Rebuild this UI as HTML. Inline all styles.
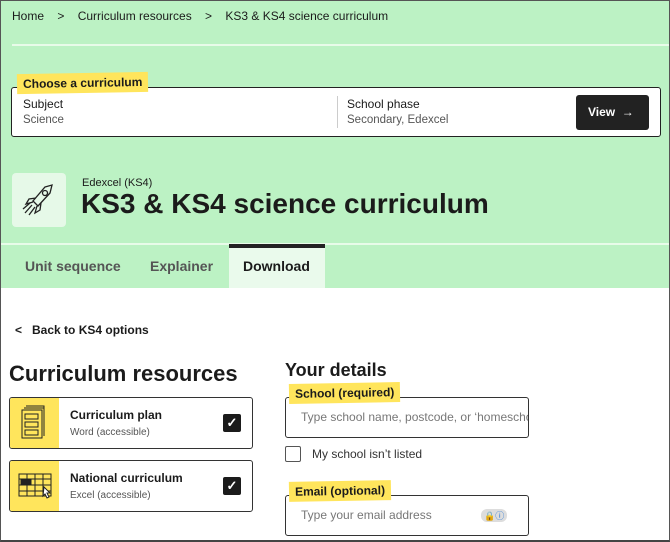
<!DOCTYPE html>
<html><head><style>
*{box-sizing:border-box;margin:0;padding:0}
body{width:670px;height:542px;overflow:hidden;font-family:"Liberation Sans",sans-serif;color:#1b1b1b;background:#fff;position:relative}
.frame{position:absolute;inset:0;border:1px solid #555;border-bottom:2px solid #444;pointer-events:none;z-index:9}
.green{position:absolute;left:0;top:0;width:670px;height:288px;background:#bcf2c4}
.a{position:absolute;white-space:nowrap}
.lbl{background:#ffe55c;font-weight:bold;font-size:12px;padding:3px 6px}
.card{position:absolute;left:9px;width:244px;height:52px;border:1.5px solid #333;border-radius:3px;background:#fff;overflow:hidden}
.card .y{position:absolute;left:0;top:0;bottom:0;width:49px;background:#ffe55c}
.card b{position:absolute;left:60px;top:10px;font-size:12px}
.card span{position:absolute;left:60px;top:29px;font-size:10px;color:#555}
.cb{position:absolute;left:213px;top:16px;width:18px;height:18px;background:#1b1b1b;border-radius:2px;color:#fff;font-size:13px;text-align:center;line-height:18px;font-weight:bold}
.inp{position:absolute;left:285px;width:244px;height:41px;border:1.5px solid #333;border-radius:3px;background:#fff;font-size:12px;color:#777;padding:12px 15px;white-space:nowrap;overflow:hidden}
</style></head><body>
<div class="green"></div>
<div class="a" style="left:12px;top:9px;font-size:12px">Home&nbsp;&nbsp;&nbsp;&nbsp;&gt;&nbsp;&nbsp;&nbsp;&nbsp;Curriculum resources&nbsp;&nbsp;&nbsp;&nbsp;&gt;&nbsp;&nbsp;&nbsp;&nbsp;KS3 &amp; KS4 science curriculum</div>
<div class="a" style="left:12px;top:44px;width:658px;height:2px;background:#e8fbe9"></div>
<div class="a" style="left:11px;top:87px;width:650px;height:50px;border:1.5px solid #222;border-radius:3px;background:#fff"></div>
<div class="a lbl" style="left:17px;top:73px;transform:rotate(-1deg)">Choose a curriculum</div>
<div class="a" style="left:23px;top:97px;font-size:12px">Subject</div>
<div class="a" style="left:23px;top:114px;font-size:11.5px;color:#555">Science</div>
<div class="a" style="left:337px;top:96px;width:1px;height:32px;background:#ccc"></div>
<div class="a" style="left:347px;top:97px;font-size:12px">School phase</div>
<div class="a" style="left:347px;top:114px;font-size:11.5px;color:#555">Secondary, Edexcel</div>
<div class="a" style="left:576px;top:95px;width:73px;height:35px;background:#222;border-radius:3px;color:#fff;font-weight:bold;font-size:12px;line-height:35px;padding-left:12px">View &nbsp;→</div>
<div class="a" style="left:12px;top:173px;width:54px;height:54px;background:#e6f9e8;border-radius:4px">
<svg width="54" height="54" viewBox="0 0 54 54" fill="none" stroke="#222" stroke-width="1.3"><path d="M33 14 L40 12 L38 20 L26 33 L21 28 Z"/><path d="M24 25 L17 26 L14 31 L21 29"/><path d="M29 30 L28 37 L23 40 L25 33"/><path d="M20 32 L13 40 M23 34 L17 42 M18 30 L11 36"/><circle cx="33" cy="20" r="2.5"/></svg></div>
<div class="a" style="left:82px;top:177px;font-size:11px">Edexcel (KS4)</div>
<div class="a" style="left:81px;top:188px;font-size:28px;font-weight:bold">KS3 &amp; KS4 science curriculum</div>
<div class="a" style="left:0;top:243px;width:670px;height:2px;background:#e8fbe9"></div>
<div class="a" style="left:25px;top:258px;font-size:14px;font-weight:bold;color:#555">Unit sequence</div>
<div class="a" style="left:150px;top:258px;font-size:14px;font-weight:bold;color:#555">Explainer</div>
<div class="a" style="left:229px;top:244px;width:96px;height:44px;background:#eafaec;border-top:4px solid #222"></div>
<div class="a" style="left:243px;top:258px;font-size:14px;font-weight:bold">Download</div>
<div class="a" style="left:15px;top:323px;font-size:12px;font-weight:bold">&lt;&nbsp;&nbsp;&nbsp;Back to KS4 options</div>
<div class="a" style="left:9px;top:361px;font-size:22px;font-weight:bold">Curriculum resources</div>
<div class="card" style="top:397px"><div class="y"><svg width="49" height="50" fill="none" stroke="#222" stroke-width="1"><path d="M12 12h20v28h-20z M14 10h20v28 M16 8h18v2"/><rect x="15" y="16" width="13" height="5"/><rect x="15" y="24" width="13" height="5"/><rect x="15" y="32" width="13" height="5"/></svg></div><b>Curriculum plan</b><span>Word (accessible)</span><div class="cb">✓</div></div>
<div class="card" style="top:460px"><div class="y"><svg width="49" height="50" fill="none" stroke="#222" stroke-width="1"><rect x="9" y="13" width="32" height="22"/><path d="M9 18h32M9 24h32M9 30h32M17 13v22M25 13v22M33 13v22"/><rect x="11" y="19" width="10" height="5" fill="#222"/><path d="M34 26l6 6-3 0 2 4-2 1-2-4-2 2z" fill="#fff"/></svg></div><b>National curriculum</b><span>Excel (accessible)</span><div class="cb">✓</div></div>
<div class="a" style="left:285px;top:360px;font-size:18px;font-weight:bold">Your details</div>
<div class="inp" style="top:397px">Type school name, postcode, or ‘homeschool’</div>
<div class="a lbl" style="left:289px;top:383px;transform:rotate(-1deg)">School (required)</div>
<div class="a" style="left:285px;top:446px;width:16px;height:16px;border:1.5px solid #555;border-radius:2px;background:#fff"></div>
<div class="a" style="left:312px;top:447px;font-size:12px;color:#333">My school isn’t listed</div>
<div class="inp" style="top:495px">Type your email address<span style="position:absolute;left:195px;top:13px;font-size:9px;background:#ddd;border-radius:6px;padding:0 3px;color:#222">🔒<span style="color:#1a6fd6">ⓘ</span></span></div>
<div class="a lbl" style="left:289px;top:481px;transform:rotate(-1deg)">Email (optional)</div>
<div class="frame"></div>
</body></html>
